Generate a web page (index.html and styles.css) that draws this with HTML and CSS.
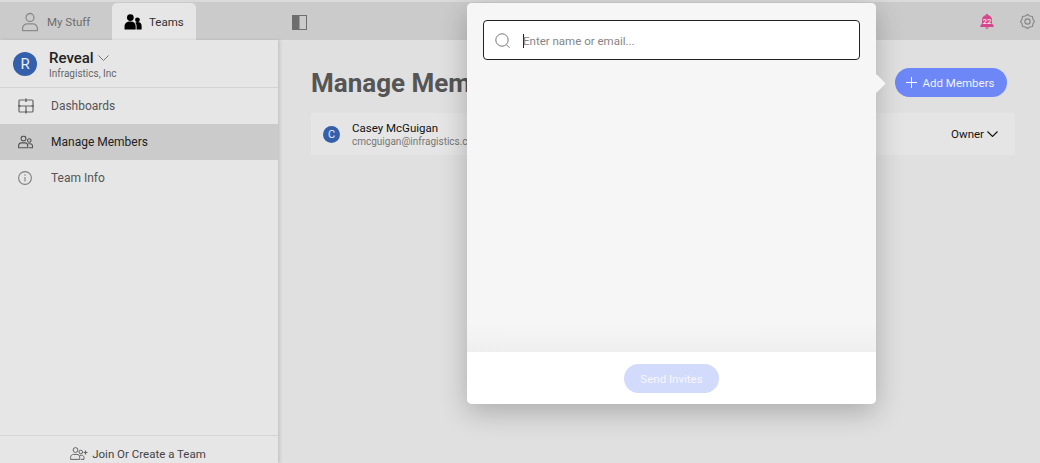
FILE: index.html
```html
<!DOCTYPE html>
<html lang="en">
<head>
<meta charset="utf-8">
<title>Manage Members</title>
<link rel="stylesheet" href="styles.css">
</head>
<body>
<div class="app">
  <header class="topbar">
    <div class="tab">
      <svg class="tab-icon" width="20" height="20" viewBox="0 0 20 20" fill="none" stroke="#8c8c8c" stroke-width="1.3"><circle cx="10" cy="5.5" r="4"/><path d="M2.6 18.6v-2.2c0-3 2.6-4.6 4.4-4.6h6c1.8 0 4.4 1.600 4.400 4.600v2.200z"/></svg>
      <span>My Stuff</span>
    </div>
    <div class="tab tab-active">
      <svg class="tab-icon" width="18" height="16" viewBox="0 0 20 18" fill="#000"><circle cx="7" cy="4" r="3.800"/><circle cx="15" cy="6.500" r="2.700"/><path d="M0.500 17.500v-3.500c0-3.500 2.500-5.500 6.500-5.500s6 2 6 5.500v3.500z"/><path d="M14 17.500v-4c0-1.500-.5-2.800-1.500-3.700.8-.5 1.700-.8 2.700-.8 2.800 0 4.500 1.600 4.500 4.300v4.200z"/></svg>
      <span>Teams</span>
    </div>
    <svg class="panel-toggle" width="15" height="15" viewBox="0 0 15 15"><rect x="0.500" y="0.500" width="14" height="14" fill="none" stroke="#6e6e6e"/><rect x="1" y="1" width="6.500" height="13" fill="#6e6e6e"/></svg>
    <div class="top-right">
      <div class="bell">
        <svg width="14" height="15" viewBox="0 0 14 15" fill="#d6488d"><path d="M7 0c.8 0 1.200.5 1.300 1.300 2.400.5 3.700 2.300 3.700 4.700v3.500l1.700 2.300v1.200H.3v-1.200L2 9.500V6c0-2.400 1.300-4.200 3.700-4.700C5.800.5 6.200 0 7 0z"/><path d="M5.300 13.600h3.400c0 .8-.8 1.400-1.700 1.400s-1.700-.6-1.700-1.400z"/></svg>
        <span class="bell-count">22</span>
      </div>
      <svg class="gear" width="15" height="15" viewBox="0 0 16 16" fill="none" stroke="#858585" stroke-width="1.200" stroke-linejoin="round"><path d="M15.500 8L13.820 10.410 13.300 13.300 10.410 13.820 8 15.500 5.590 13.820 2.700 13.300 2.180 10.410 .5 8 2.180 5.590 2.700 2.700 5.590 2.180 8 .5 10.410 2.180 13.300 2.700 13.820 5.590z"/><circle cx="8" cy="8" r="2.800"/></svg>
    </div>
  </header>

  <div class="body-row">
    <aside class="sidebar">
      <div class="team-head">
        <div class="avatar avatar-lg">R</div>
        <div class="team-text">
          <div class="team-name">Reveal
            <svg width="11" height="6" viewBox="0 0 11 6" fill="none" stroke="#777" stroke-width="1"><path d="M.5.500l5 5 5-5"/></svg>
          </div>
          <div class="team-org">Infragistics, Inc</div>
        </div>
      </div>
      <nav class="nav">
        <div class="nav-item">
          <svg width="16" height="16" viewBox="0 0 16 16" fill="none" stroke="#666" stroke-width="1.200"><rect x="1" y="2" width="14" height="12" rx="1"/><path d="M1 8h14M8 8v6"/><path d="M8 .5v3.500M8 12.500v3M0 8h2.500M13.500 8H16" stroke-width="1.500"/></svg>
          <span>Dashboards</span>
        </div>
        <div class="nav-item nav-active">
          <svg width="15" height="13" viewBox="0 0 15 13" fill="none" stroke="#555" stroke-width="1.100"><circle cx="5.500" cy="3" r="2.400"/><circle cx="11.300" cy="5" r="1.800"/><path d="M.6 12.400v-2c0-2 1.600-3 3-3h3.500c1.400 0 2.600 1 2.600 3v2z"/><path d="M10.700 12.400h3.800v-1.800c0-1.500-1-2.300-2.300-2.300h-2"/></svg>
          <span>Manage Members</span>
        </div>
        <div class="nav-item">
          <svg width="14" height="14" viewBox="0 0 14 14" fill="none" stroke="#808080" stroke-width="1.100"><circle cx="7" cy="7" r="6.400"/><path d="M7 6v4.500M7 3.300v1.400"/></svg>
          <span>Team Info</span>
        </div>
      </nav>
      <div class="join">
        <svg width="18" height="13" viewBox="0 0 18 13" fill="none" stroke="#666" stroke-width="1"><circle cx="5.500" cy="3" r="2.400"/><circle cx="10.800" cy="5" r="1.800"/><path d="M.6 12.400v-2c0-2 1.600-3 3-3h3.500c1.400 0 2.600 1 2.600 3v2z"/><path d="M10.700 12.400h3.300V10.600c0-1.500-1-2.300-2.300-2.300h-2"/><path d="M15.500 3.500v4M13.500 5.500h4" stroke-width="1.200"/></svg>
        <span>Join Or Create a Team</span>
      </div>
    </aside>

    <main class="main">
      <div class="main-head">
        <h1>Manage Members</h1>
        <button class="add-btn">
          <svg width="11" height="11" viewBox="0 0 11 11" stroke="#fff" stroke-width="1"><path d="M5.500 0v11M0 5.500h11"/></svg>
          Add Members
        </button>
      </div>
      <div class="member">
        <div class="avatar avatar-sm">C</div>
        <div class="member-text">
          <div class="member-name">Casey McGuigan</div>
          <div class="member-mail">cmcguigan@infragistics.com</div>
        </div>
        <div class="role">Owner
          <svg width="11" height="6" viewBox="0 0 11 6" fill="none" stroke="#111" stroke-width="1.100"><path d="M.5.500l5 5 5-5"/></svg>
        </div>
      </div>
    </main>
  </div>
</div>

<section class="popover">
  <div class="pop-arrow"></div>
  <div class="pop-body">
    <div class="search">
      <svg width="16" height="16" viewBox="0 0 16 16" fill="none" stroke="#777" stroke-width="1"><circle cx="7" cy="7" r="6.200"/><path d="M11.500 11.800l3 3"/></svg>
      <span class="caret"></span>
      <span class="placeholder">Enter name or email...</span>
    </div>
  </div>
  <div class="pop-foot">
    <button class="send-btn">Send Invites</button>
  </div>
</section>
</body>
</html>
```
FILE: styles.css
```css
* { box-sizing: border-box; }
html, body { margin: 0; height: 100%; overflow: hidden; }
body { font-family: Roboto, "Liberation Sans", sans-serif; background: #e0e0e0; color: #333; position: relative; }
svg { display: block; flex: none; }
.app { display: flex; flex-direction: column; height: 463px; }

.topbar { height: 40px; flex: none; display: flex; align-items: flex-end; background: #cbcbcb; border-top: 2px solid #dadada; position: relative; }
.tab { height: 37px; display: flex; align-items: center; gap: 7px; padding-left: 20px; width: 112px; font-size: 11.500px; color: #6e6e6e; border-radius: 5px 5px 0 0; }
.tab-active { width: 84px; background: #e6e6e6; color: #303030; padding-left: 12px; }
.panel-toggle { margin: 0 0 10px 96px; }
.top-right { margin-left: auto; display: flex; align-items: center; gap: 26px; padding: 0 5px 11px 0; }
.bell { position: relative; width: 14px; height: 15px; }
.bell-count { position: absolute; left: 0; right: 0; top: 3px; text-align: center; font-size: 8px; line-height: 9px; font-weight: 500; color: #f6e3ee; }

.body-row { flex: 1; display: flex; min-height: 0; }
.sidebar { width: 278px; flex: none; display: flex; flex-direction: column; background: #e6e6e6; box-shadow: 2px 0 3px rgba(0,0,0,.12); position: relative; }
.team-head { height: 48px; flex: none; display: flex; align-items: center; gap: 12px; padding: 0 0 0 13px; border-bottom: 1px solid #d3d3d3; }
.avatar { display: flex; align-items: center; justify-content: center; border-radius: 50%; background: #3460ab; color: #e8ecf5; flex: none; }
.avatar-lg { width: 24px; height: 24px; font-size: 15px; }
.avatar-sm { width: 17px; height: 17px; font-size: 11px; }
.team-text { display: flex; flex-direction: column; margin-top: 2px; }
.team-name { display: flex; align-items: center; gap: 4px; font-size: 15px; line-height: 18px; font-weight: 500; color: #222; }
.team-org { font-size: 10px; line-height: 13px; color: #666; }
.nav { flex: 1; }
.nav-item { height: 36px; display: flex; align-items: center; font-size: 12px; color: #555; position: relative; padding-left: 51px; }
.nav-item svg { position: absolute; left: 18px; top: 50%; transform: translateY(-50%); }
.nav-active { background: #cbcbcb; color: #222; }
.join { height: 28px; flex: none; display: flex; align-items: flex-start; justify-content: center; gap: 4px; padding: 11px 2px 0 0; border-top: 1px solid #d5d5d5; font-size: 11.500px; line-height: 14px; color: #444; }

.main { flex: 1; min-width: 0; padding: 28px 25px 0 33px; }
.main-head { display: flex; align-items: center; justify-content: space-between; height: 29px; padding-right: 8px; margin-bottom: 16px; }
h1 { margin: 0; font-size: 26px; font-weight: 700; line-height: 30px; color: #555; }
.add-btn { width: 112px; height: 29px; display: flex; align-items: center; justify-content: center; gap: 6px; padding: 0 2px 0 0; border: 0; border-radius: 15px; background: #6d87f7; color: #f2f4fe; font: 11.500px Roboto, sans-serif; }
.member { height: 42px; display: flex; align-items: center; background: #e5e5e5; padding: 0 17px 0 12px; }
.member-text { margin-left: 12px; flex: 1; }
.member-name { font-size: 11.500px; line-height: 14px; color: #111; }
.member-mail { font-size: 10px; line-height: 13px; color: #777; }
.role { display: flex; align-items: center; gap: 3px; font-size: 11.500px; color: #111; }

.popover { position: absolute; left: 467px; top: 3px; width: 409px; height: 401px; display: flex; flex-direction: column; background: #f6f6f6; border-radius: 5px; box-shadow: 0 8px 28px rgba(0,0,0,.24); }
.pop-arrow { position: absolute; left: 403px; top: 74px; width: 13px; height: 13px; background: #f6f6f6; transform: rotate(45deg); }
.pop-body { flex: 1; padding: 17px 16px 0; position: relative; background: linear-gradient(to bottom, #f6f6f6 0, #f6f6f6 320px, #efefef 349px); border-radius: 5px 5px 0 0; }
.search { height: 40px; display: flex; align-items: center; background: #fff; border: 1px solid #222; border-radius: 4px; padding: 2px 0 0 11px; font-size: 11.500px; }
.caret { width: 1px; height: 14px; background: #222; margin-left: 12px; }
.placeholder { color: #858585; margin-left: -1px; }
.pop-foot { height: 52px; flex: none; display: flex; align-items: center; justify-content: center; background: #fff; border-radius: 0 0 5px 5px; position: relative; }
.send-btn { width: 95px; height: 29px; padding: 2px 0 0; border: 0; border-radius: 15px; background: #d3dbfc; color: #f5f7ff; font: 11.500px Roboto, sans-serif; }
```
